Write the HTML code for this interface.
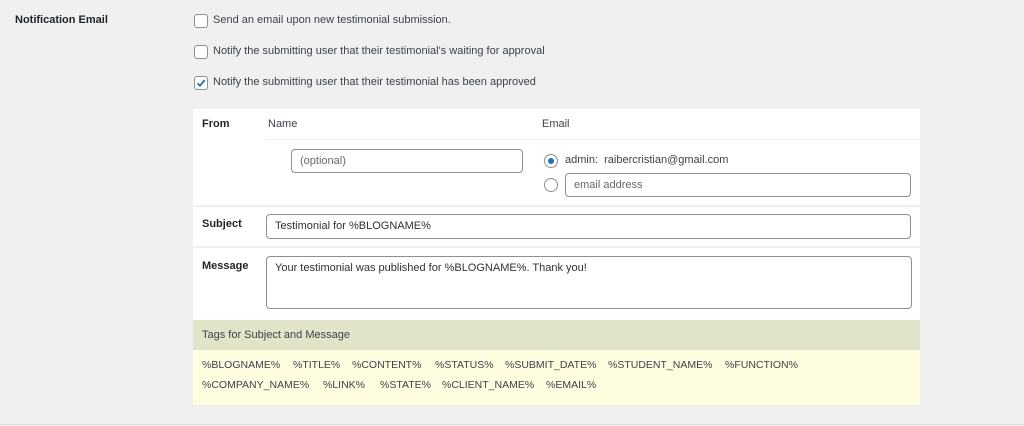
<!DOCTYPE html><html><head><style>
body{margin:0;width:1024px;height:426px;background:#f0f0f1;font-family:"Liberation Sans",sans-serif;font-size:11px;color:#3c434a;position:relative;overflow:hidden}
.a{position:absolute;white-space:nowrap}
.cb{position:absolute;width:12px;height:12px;border:1px solid #8c8f94;border-radius:3px;background:#fff}
.in{position:absolute;border:1px solid #8c8f94;border-radius:4px;background:#fff;box-sizing:border-box;padding:0 8px;line-height:22px;color:#2c3338}
.rd{position:absolute;width:12px;height:12px;border:1px solid #8c8f94;border-radius:50%;background:#fff}
b{font-weight:bold;color:#1d2327}
</style></head><body>
<div class="a" style="left:15px;top:14px"><b>Notification Email</b></div>
<div class="cb" style="left:194px;top:14px"></div><div class="a" style="left:213px;top:14px">Send an email upon new testimonial submission.</div>
<div class="cb" style="left:194px;top:45px"></div><div class="a" style="left:213px;top:45px">Notify the submitting user that their testimonial's waiting for approval</div>
<div class="cb" style="left:194px;top:76px"></div><svg class="a" style="left:195px;top:77px" width="12" height="12" viewBox="0 0 12 12"><path d="M2.5 6.2L5 8.7 9.8 3" fill="none" stroke="#2271b1" stroke-width="1.8"/></svg><div class="a" style="left:213px;top:76px">Notify the submitting user that their testimonial has been approved</div>
<div class="a" style="left:193px;top:109px;width:727px;height:296px;background:#fff"></div>
<div class="a" style="left:265px;top:139px;width:655px;height:1px;background:#f0f0f1"></div>
<div class="a" style="left:193px;top:205px;width:727px;height:2px;background:#f0f0f1"></div>
<div class="a" style="left:193px;top:246px;width:727px;height:2px;background:#f0f0f1"></div>
<div class="a" style="left:202px;top:118px"><b>From</b></div>
<div class="a" style="left:268px;top:118px">Name</div>
<div class="a" style="left:542px;top:118px">Email</div>
<div class="in" style="left:291px;top:149px;width:232px;height:24px;color:#646970">(optional)</div>
<div class="rd" style="left:544px;top:154px"></div><div class="a" style="left:548px;top:158px;width:6px;height:6px;border-radius:50%;background:#2271b1"></div>
<div class="a" style="left:565px;top:154px">admin:&nbsp; raibercristian@gmail.com</div>
<div class="rd" style="left:544px;top:178px"></div>
<div class="in" style="left:565px;top:173px;width:346px;height:24px;color:#646970">email address</div>
<div class="a" style="left:202px;top:218px"><b>Subject</b></div>
<div class="in" style="left:266px;top:214px;width:645px;height:25px">Testimonial for %BLOGNAME%</div>
<div class="a" style="left:202px;top:260px"><b>Message</b></div>
<div class="in" style="left:266px;top:256px;width:646px;height:53px;line-height:18px;padding-top:2px">Your testimonial was published for %BLOGNAME%. Thank you!</div>
<div class="a" style="left:193px;top:320px;width:727px;height:30px;background:#e2e4c9"></div>
<div class="a" style="left:202px;top:329px">Tags for Subject and Message</div>
<div class="a" style="left:193px;top:350px;width:727px;height:55px;background:#fefde0"></div>
<div style="font-size:10.5px">
<div class="a" style="left:202px;top:359px">%BLOGNAME%</div>
<div class="a" style="left:293px;top:359px">%TITLE%</div>
<div class="a" style="left:352px;top:359px">%CONTENT%</div>
<div class="a" style="left:435px;top:359px">%STATUS%</div>
<div class="a" style="left:505px;top:359px">%SUBMIT_DATE%</div>
<div class="a" style="left:608px;top:359px">%STUDENT_NAME%</div>
<div class="a" style="left:725px;top:359px">%FUNCTION%</div>
<div class="a" style="left:202px;top:379px">%COMPANY_NAME%</div>
<div class="a" style="left:323px;top:379px">%LINK%</div>
<div class="a" style="left:380px;top:379px">%STATE%</div>
<div class="a" style="left:442px;top:379px">%CLIENT_NAME%</div>
<div class="a" style="left:546px;top:379px">%EMAIL%</div>
</div>
<div class="a" style="left:0;top:424px;width:1024px;height:1px;background:#dcdcde"></div>
</body></html>
